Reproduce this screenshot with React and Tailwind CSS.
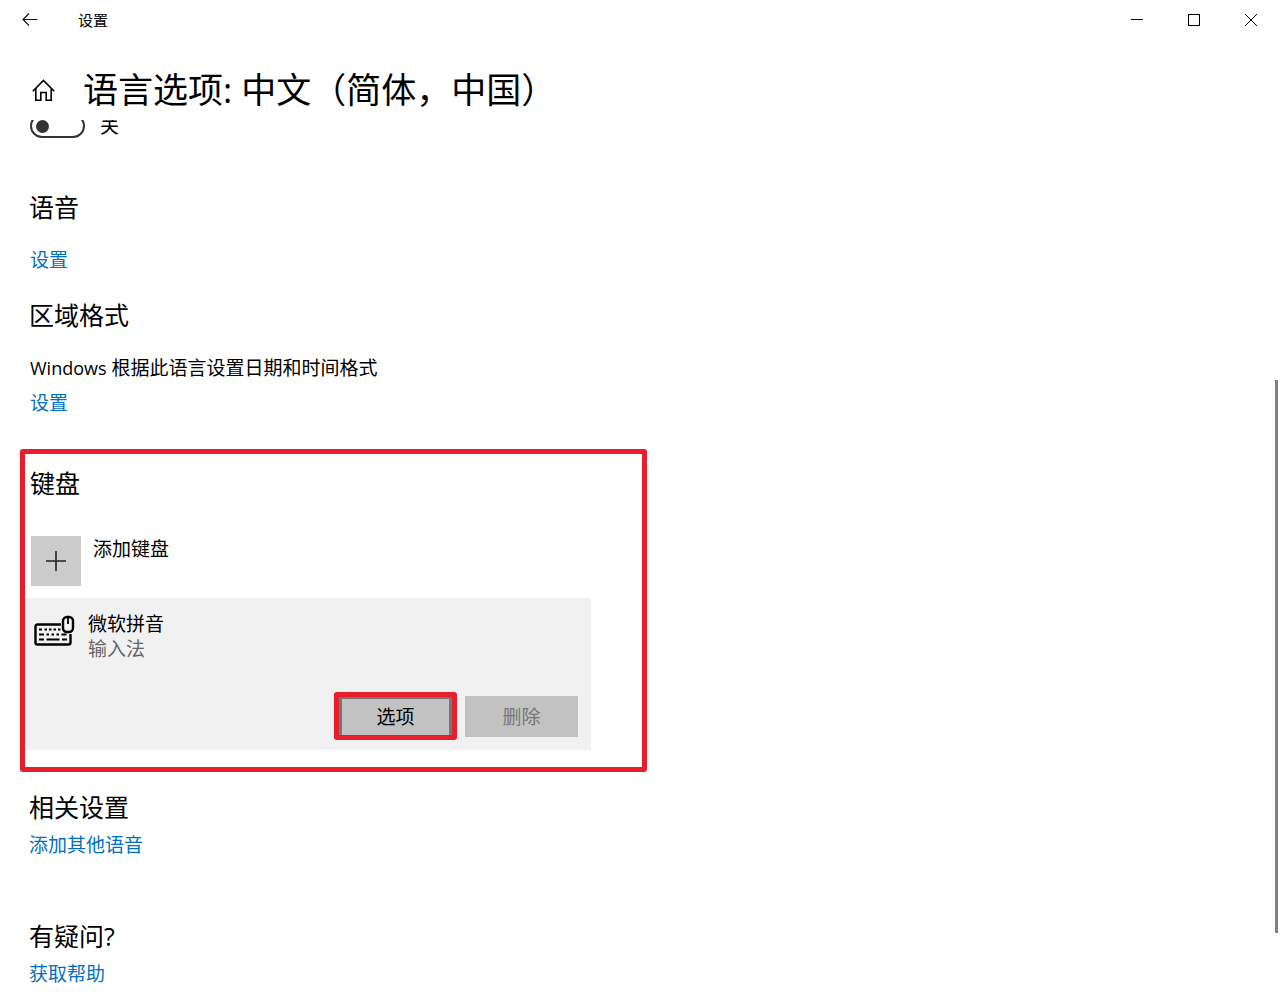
import React from "react";

const linkClass = "text-[#0070c0] hover:underline";

function BackIcon() {
  return (
    <svg width="16" height="14" viewBox="0 0 16 14" fill="none" stroke="#111" strokeWidth="1.2" aria-hidden="true">
      <path d="M15.500 6.500H1M7 .5L1 6.500l6 6" />
    </svg>
  );
}

function HomeIcon() {
  return (
    <svg width="24" height="24" viewBox="0 0 24 24" fill="none" stroke="#000" strokeWidth="1.600" aria-hidden="true">
      <path d="M.8 13.200L11.500 2.500 22.200 13.200M3.800 10.500v11.700h5V14.500h5.400v7.700h5V10.500" />
    </svg>
  );
}

function KeyboardIcon() {
  return (
    <svg width="42" height="32" viewBox="0 0 42 32" fill="none" stroke="#000" aria-hidden="true">
      <path d="M28 9.500H4.500Q2.500 9.500 2.500 11.500V27.500Q2.500 29.500 4.500 29.500H35.500Q37.500 29.500 37.500 27.500V19" strokeWidth="2.400" />
      <rect x="30" y="2" width="10" height="15" rx="4" strokeWidth="2.400" />
      <path d="M35 2v7" strokeWidth="1.800" />
      <path d="M6 14.500h3M11.500 14.500h2.500M16 14.500h2.500M20.500 14.500h2.500M25 14.500h2.500M6 19.500h5M13.500 19.500h2.500M18.500 19.500h2.500M23.500 19.500h2.500M28.500 19.500h5M6 24.500h5M13.500 24.500h13M29 24.500h5" strokeWidth="2" />
    </svg>
  );
}

function TitleBar() {
  return (
    <header className="flex h-10 items-center justify-between">
      <div className="flex items-center">
        <button aria-label="返回" className="flex h-10 w-[60px] items-center justify-center">
          <BackIcon />
        </button>
        <span className="ml-[18px] text-[15px] leading-5">设置</span>
      </div>
      <div className="flex">
        <button aria-label="最小化" className="flex h-10 w-[57px] items-center justify-center">
          <svg width="12" height="12" viewBox="0 0 12 12" stroke="#000" aria-hidden="true"><path d="M0 5.500h12" /></svg>
        </button>
        <button aria-label="最大化" className="flex h-10 w-[57px] items-center justify-center">
          <svg width="12" height="12" viewBox="0 0 12 12" fill="none" stroke="#000" aria-hidden="true"><rect x=".5" y=".5" width="11" height="11" /></svg>
        </button>
        <button aria-label="关闭" className="flex h-10 w-[58px] items-center justify-center">
          <svg width="12" height="12" viewBox="0 0 12 12" stroke="#000" aria-hidden="true"><path d="M0 0l12 12M12 0L0 12" /></svg>
        </button>
      </div>
    </header>
  );
}

function Heading({ children }) {
  return <h2 className="text-[25px] leading-[30px]">{children}</h2>;
}

export default function App() {
  return (
    <div className="relative min-h-screen bg-white font-['Open_Sans','Noto_Sans_CJK_SC',sans-serif] text-[19px] leading-6 text-black">
      <TitleBar />
      <div className="flex h-20 items-center pt-5 pl-8">
        <a href="#home" aria-label="主页"><HomeIcon /></a>
        <h1 className="ml-[27px] text-[35px] leading-[60px] whitespace-nowrap">语言选项: 中文（简体，中国）</h1>
      </div>

      <main className="overflow-hidden pb-[14px]">
        <label className="-mt-[6px] ml-[30px] flex h-6 w-fit items-center gap-[15px]">
          <input type="checkbox" role="switch" className="peer sr-only" />
          <span className="flex h-6 w-[55px] items-center rounded-full border-2 border-[#333] pl-1">
            <span className="h-[13px] w-[13px] rounded-full bg-[#333]" />
          </span>
          <span className="leading-[26px]">关</span>
        </label>

        <section className="mt-[54px] pl-[29px]">
          <Heading>语音</Heading>
          <p className="mt-[26px] pl-px"><a href="#speech" className={linkClass}>设置</a></p>
        </section>

        <section className="mt-7 pl-[29px]">
          <Heading>区域格式</Heading>
          <p className="mt-[26px] pl-px"><span className="text-[18px]">Windows</span> 根据此语言设置日期和时间格式</p>
          <p className="mt-[11px] pl-px"><a href="#region" className={linkClass}>设置</a></p>
        </section>

        <section className="mt-[34px] ml-5 max-w-[627px] rounded-[3px] border-5 border-[#e81e2b] pt-[14px] pb-[17px]">
          <div className="pl-[5px]"><Heading>键盘</Heading></div>
          <button className="mt-[38px] ml-[6px] flex items-start gap-3 text-left leading-[26px]">
            <span className="flex h-[50px] w-[50px] items-center justify-center bg-[#ccc]">
              <svg width="20" height="20" viewBox="0 0 20 20" stroke="#222" strokeWidth="1.600" aria-hidden="true"><path d="M0 10h20M10 0v20" /></svg>
            </span>
            <span>添加键盘</span>
          </button>
          <div className="mt-3 max-w-[566px] bg-[#f1f1f1] pt-[14px] pb-[10px]">
            <div className="flex gap-[13px] pl-2">
              <span className="mt-[3px]"><KeyboardIcon /></span>
              <div className="leading-[25px]">
                <p>微软拼音</p>
                <p className="text-[#666]">输入法</p>
              </div>
            </div>
            <div className="mt-[30px] flex items-center justify-end gap-2 pr-[13px]">
              <div className="flex h-12 w-[123px] rounded-[3px] border-5 border-[#e81e2b]">
                <button className="flex-1 border-x-3 border-t-2 border-[#767676] bg-[#c2c2c2]">选项</button>
              </div>
              <button disabled className="h-[41px] w-[113px] bg-[#c2c2c2] pt-px text-[#777]">删除</button>
            </div>
          </div>
        </section>

        <section className="mt-5 pl-[29px]">
          <Heading>相关设置</Heading>
          <p className="mt-[11px]"><a href="#add-voice" className={linkClass}>添加其他语音</a></p>
        </section>

        <section className="mt-16 pl-[29px]">
          <Heading>有疑问?</Heading>
          <p className="mt-[11px]"><a href="#help" className={linkClass}>获取帮助</a></p>
        </section>
      </main>

      <div className="absolute top-[380px] right-[2px] h-[553px] w-[3px] bg-[#808080]" />
    </div>
  );
}
